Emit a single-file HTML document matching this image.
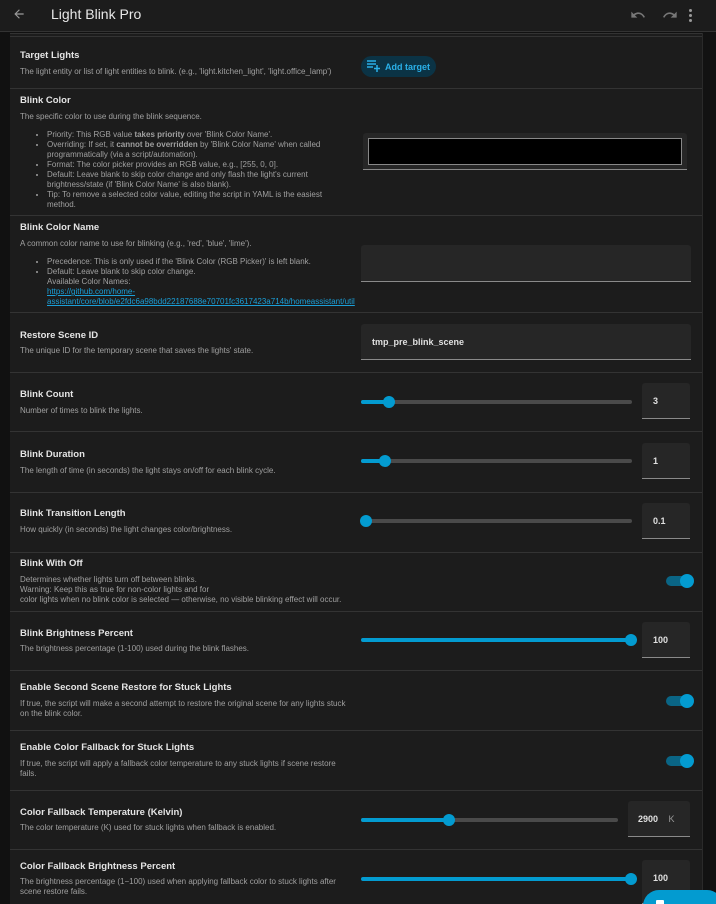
<!DOCTYPE html>
<html><head><meta charset="utf-8"><style>
*{box-sizing:border-box;margin:0;padding:0}
html,body{width:716px;height:904px;overflow:hidden}
body{background:#111;font-family:"Liberation Sans",sans-serif;position:relative;color:#e1e1e1}
.hdr{position:absolute;left:0;top:0;width:716px;height:32px;background:#1c1c1c;border-bottom:1px solid #333}
.card{position:absolute;left:10px;top:33px;width:692px;height:871px;background:#1c1c1c;border-top:1px solid #333}
.abs{position:absolute}
.line{position:absolute;left:10px;width:692px;height:1px;background:#333}
.t{position:absolute;left:20px;font-size:9.5px;font-weight:bold;color:#e4e4e4;line-height:12px}
.d{position:absolute;left:20px;font-size:8px;color:#a0a0a0;line-height:10px}
ul{list-style:disc;padding-left:27px}
.tr{position:absolute;height:4px;border-radius:2px;background:#4a4a4a}
.fi{position:absolute;height:4px;border-radius:2px;background:#039bd0}
.th{position:absolute;width:12px;height:12px;border-radius:50%;background:#039bd0}
.in{position:absolute;background:#262626;border-bottom:1px solid #8a8a8a;border-radius:3px 3px 0 0;font-size:9px;font-weight:bold;color:#e0e0e0;padding-left:11px}
.tg{position:absolute;width:26px;height:10px;border-radius:5px;background:#0a6585}
.tg:after{content:"";position:absolute;right:-2px;top:-2px;width:14px;height:14px;border-radius:50%;background:#039bd0}
</style></head><body>
<div class="hdr">
<svg class="abs" style="left:12px;top:7px" width="14" height="14" viewBox="0 0 24 24"><path d="M20 11H7.8l5.6-5.6L12 4l-8 8 8 8 1.4-1.4L7.8 13H20z" fill="#9a9a9a"/></svg>
<div class="abs" style="left:51px;top:6px;font-size:14px;color:#e8e8e8">Light Blink Pro</div>
<svg class="abs" style="left:630px;top:7px" width="16" height="16" viewBox="0 0 24 24"><path d="M12.5 8c-2.6 0-5 1-6.9 2.6L2 7v9h9l-3.6-3.6c1.4-1.2 3.2-1.9 5.1-1.9 3.5 0 6.5 2.3 7.6 5.5l2.4-.8C21 11.5 17.1 8 12.5 8z" fill="#777"/></svg>
<svg class="abs" style="left:662px;top:7px" width="16" height="16" viewBox="0 0 24 24"><path d="M18.4 10.6C16.6 9 14.1 8 11.5 8 6.9 8 3 11.5 1.5 15.2l2.4.8c1.1-3.2 4.1-5.5 7.6-5.5 1.9 0 3.7.7 5.1 1.9L13 16h9V7z" fill="#777"/></svg>
<div class="abs" style="left:689px;top:9px;width:3px;height:3px;background:#999;border-radius:50%;box-shadow:0 5px 0 #999,0 10px 0 #999"></div>
</div>
<div class="card"></div>
<div class="abs" style="left:702px;top:33px;width:14px;height:871px;background:#121212;border-left:1px solid #2a2a2a"></div>
<div class="line" style="top:36px"></div>
<div class="line" style="top:88px"></div><div class="line" style="top:215px"></div><div class="line" style="top:312px"></div><div class="line" style="top:372px"></div><div class="line" style="top:431px"></div><div class="line" style="top:492px"></div><div class="line" style="top:552px"></div><div class="line" style="top:611px"></div><div class="line" style="top:670px"></div><div class="line" style="top:730px"></div><div class="line" style="top:790px"></div><div class="line" style="top:849px"></div>

<div class="t" style="top:50px">Target Lights</div>
<div class="d" style="top:67px">The light entity or list of light entities to blink. (e.g., 'light.kitchen_light', 'light.office_lamp')</div>
<div class="abs" style="left:361px;top:56px;width:75px;height:21px;border-radius:11px;background:#0b3345;color:#2ab0e8;font-size:9px;font-weight:bold;padding:6px 0 0 24px">Add target</div>
<svg class="abs" style="left:367px;top:60px" width="14" height="12" viewBox="0 0 14 12"><path d="M0 1h9M0 4h9M0 7h6M10 5v7M7 8.5h6" stroke="#2ab0e8" stroke-width="1.5"/></svg>

<div class="t" style="top:95px">Blink Color</div>
<div class="d" style="top:112px">The specific color to use during the blink sequence.</div>
<div class="d" style="top:130px;width:305px"><ul><li>Priority: This RGB value <b>takes priority</b> over 'Blink Color Name'.</li><li>Overriding: If set, it <b>cannot be overridden</b> by 'Blink Color Name' when called programmatically (via a script/automation).</li><li>Format: The color picker provides an RGB value, e.g., [255, 0, 0].</li><li>Default: Leave blank to skip color change and only flash the light's current brightness/state (if 'Blink Color Name' is also blank).</li><li>Tip: To remove a selected color value, editing the script in YAML is the easiest method.</li></ul></div>
<div class="abs" style="left:363px;top:133px;width:324px;height:37px;background:#262626;border-bottom:1px solid #888;border-radius:3px 3px 0 0"></div>
<div class="abs" style="left:368px;top:138px;width:314px;height:27px;background:#000;border:1px solid #888"></div>

<div class="t" style="top:222px">Blink Color Name</div>
<div class="d" style="top:239px">A common color name to use for blinking (e.g., 'red', 'blue', 'lime').</div>
<div class="d" style="top:257px;width:342px;white-space:nowrap;overflow:hidden"><ul><li>Precedence: This is only used if the 'Blink Color (RGB Picker)' is left blank.</li><li>Default: Leave blank to skip color change.<br>Available Color Names:<br><span style="color:#1a9fd8;text-decoration:underline">https://github.com/home-<br>assistant/core/blob/e2fdc6a98bdd22187688e70701fc3617423a714b/homeassistant/util</span></li></ul></div>
<div class="in" style="left:361px;top:245px;width:330px;height:37px"></div>

<div class="t" style="top:330px">Restore Scene ID</div>
<div class="d" style="top:346px">The unique ID for the temporary scene that saves the lights' state.</div>
<div class="in" style="left:361px;top:324px;width:330px;height:36px;padding-top:13px">tmp_pre_blink_scene</div>

<div class="t" style="top:389px">Blink Count</div>
<div class="d" style="top:406px">Number of times to blink the lights.</div>
<div class="tr" style="left:361px;top:400px;width:271px"></div><div class="fi" style="left:361px;top:400px;width:28px"></div><div class="th" style="left:383px;top:396px"></div>
<div class="in" style="left:642px;top:383px;width:48px;height:36px;padding-top:13px">3</div>

<div class="t" style="top:449px">Blink Duration</div>
<div class="d" style="top:466px">The length of time (in seconds) the light stays on/off for each blink cycle.</div>
<div class="tr" style="left:361px;top:459px;width:271px"></div><div class="fi" style="left:361px;top:459px;width:24px"></div><div class="th" style="left:379px;top:455px"></div>
<div class="in" style="left:642px;top:443px;width:48px;height:36px;padding-top:13px">1</div>

<div class="t" style="top:508px">Blink Transition Length</div>
<div class="d" style="top:525px">How quickly (in seconds) the light changes color/brightness.</div>
<div class="tr" style="left:361px;top:519px;width:271px"></div><div class="th" style="left:360px;top:515px"></div>
<div class="in" style="left:642px;top:503px;width:48px;height:36px;padding-top:13px">0.1</div>

<div class="t" style="top:558px">Blink With Off</div>
<div class="d" style="top:575px">Determines whether lights turn off between blinks.<br>Warning: Keep this as true for non-color lights and for<br>color lights when no blink color is selected — otherwise, no visible blinking effect will occur.</div>
<div class="tg" style="left:666px;top:576px"></div>

<div class="t" style="top:628px">Blink Brightness Percent</div>
<div class="d" style="top:644px">The brightness percentage (1-100) used during the blink flashes.</div>
<div class="tr" style="left:361px;top:638px;width:271px;background:#039bd0"></div><div class="th" style="left:625px;top:634px"></div>
<div class="in" style="left:642px;top:622px;width:48px;height:36px;padding-top:13px">100</div>

<div class="t" style="top:682px">Enable Second Scene Restore for Stuck Lights</div>
<div class="d" style="top:699px;width:335px">If true, the script will make a second attempt to restore the original scene for any lights stuck on the blink color.</div>
<div class="tg" style="left:666px;top:696px"></div>

<div class="t" style="top:742px">Enable Color Fallback for Stuck Lights</div>
<div class="d" style="top:759px;width:330px">If true, the script will apply a fallback color temperature to any stuck lights if scene restore fails.</div>
<div class="tg" style="left:666px;top:756px"></div>

<div class="t" style="top:807px">Color Fallback Temperature (Kelvin)</div>
<div class="d" style="top:823px">The color temperature (K) used for stuck lights when fallback is enabled.</div>
<div class="tr" style="left:361px;top:818px;width:257px"></div><div class="fi" style="left:361px;top:818px;width:88px"></div><div class="th" style="left:443px;top:814px"></div>
<div class="in" style="left:628px;top:801px;width:62px;height:36px;padding-top:13px;padding-left:10px">2900 <span style="color:#999;font-weight:normal;margin-left:8px">K</span></div>

<div class="t" style="top:861px">Color Fallback Brightness Percent</div>
<div class="d" style="top:877px;width:335px">The brightness percentage (1−100) used when applying fallback color to stuck lights after scene restore fails.</div>
<div class="tr" style="left:361px;top:877px;width:271px;background:#039bd0"></div><div class="th" style="left:625px;top:873px"></div>
<div class="in" style="left:642px;top:860px;width:48px;height:44px;padding-top:13px">100</div>
<div class="abs" style="left:643px;top:890px;width:80px;height:40px;border-radius:16px;background:#039bd0"></div>
<div class="abs" style="left:656px;top:900px;width:8px;height:8px;background:#fff;border-radius:1px"></div>
</body></html>
